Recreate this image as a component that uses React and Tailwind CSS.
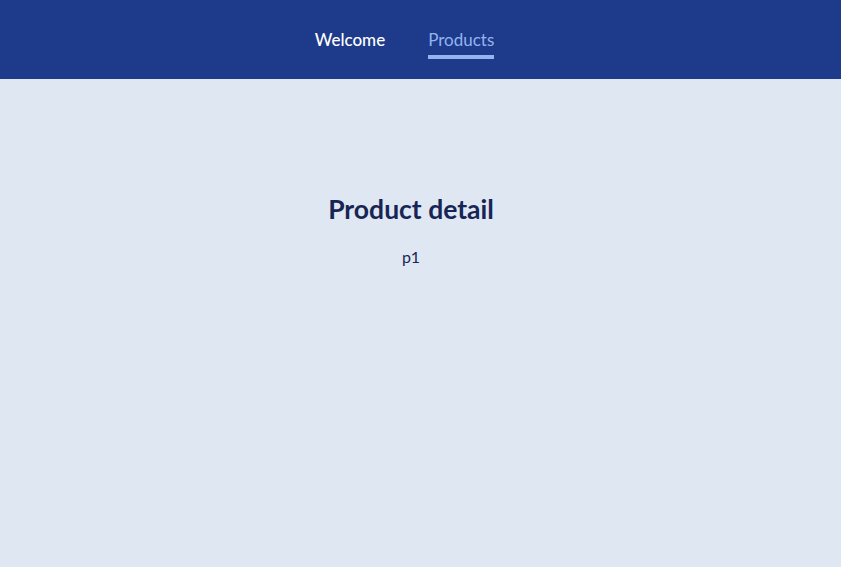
export default function App() {
  return (
    <div className="min-h-[567px] bg-[#dfe7f3]" style={{ fontFamily: "Lato, 'Noto Sans', sans-serif" }}>
      <header className="h-[79px] bg-[#1e3a8a] flex justify-center pr-[32px]">
        <nav className="flex gap-[43px] pt-[29px]">
          <a className="text-white text-[17px] leading-[21px] h-[30px] font-medium">Welcome</a>
          <a className="text-[#93b4ee] text-[17px] leading-[21px] h-[30px] border-b-[4px] border-[#93b4ee]">Products</a>
        </nav>
      </header>
      <main className="flex flex-col items-center pr-[19px] pt-[113px]">
        <h1 className="text-[26.5px] leading-[34px] font-bold text-[#172554]">Product detail</h1>
        <p className="mt-[19px] text-[16px] text-[#172554]">p1</p>
      </main>
    </div>
  );
}
